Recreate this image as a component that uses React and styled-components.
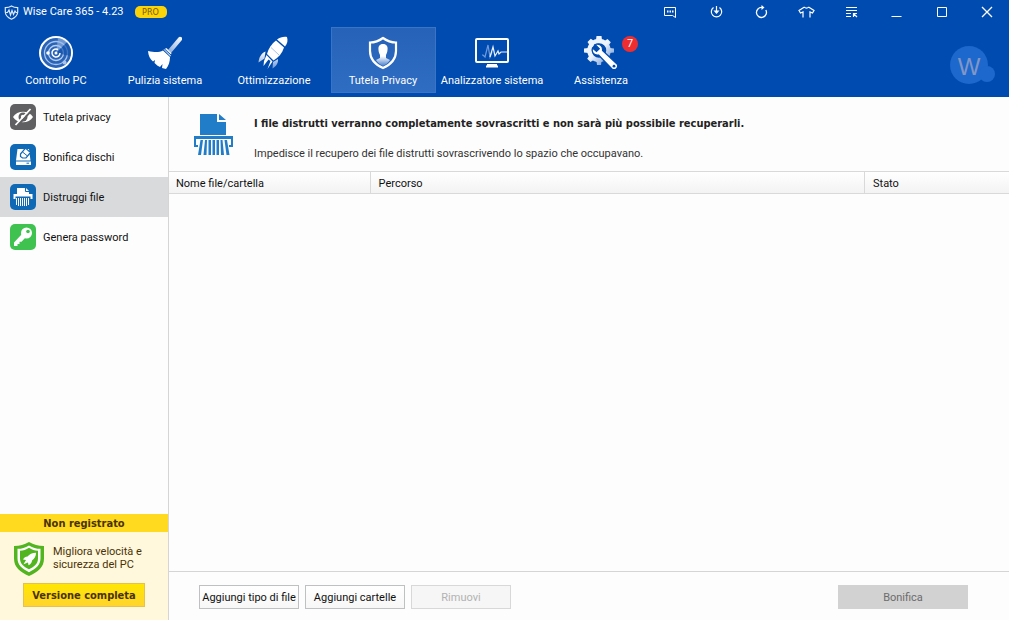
import React from "react";
import styled, { createGlobalStyle } from "styled-components";

const GlobalStyle = createGlobalStyle`
  * { box-sizing: border-box; }
  body {
    margin: 0;
    background: #fdfdfd;
    color: #111;
    font: 11px/14px Roboto, "DejaVu Sans Condensed", sans-serif;
  }
  button { font: inherit; color: inherit; padding: 0; border: 0; background: none; }
  svg { display: block; flex: none; }
`;

const boldFont = `"DejaVu Sans Condensed", "DejaVu Sans", sans-serif`;

const Window = styled.div`
  min-height: 100vh;
  display: flex;
  flex-direction: column;
`;

const Header = styled.header`
  background: #004bb0;
  color: #fff;
  padding-bottom: 4px;
`;

const TitleBar = styled.div`
  height: 24px;
  display: flex;
  align-items: center;
  padding-left: 4px;
`;

const AppTitle = styled.h1`
  margin: 0 11px 0 4px;
  font-size: 11px;
  font-weight: 400;
`;

const ProBadge = styled.span`
  width: 32px;
  height: 12px;
  border-radius: 5px;
  background: #fbd309;
  color: #7a5a00;
  font: 9px/12px "DejaVu Sans Condensed", sans-serif;
  text-align: center;
`;

const WindowControls = styled.div`
  margin-left: auto;
  display: flex;
`;

const ControlButton = styled.button`
  width: 45px;
  height: 24px;
  display: flex;
  align-items: center;
  justify-content: center;
`;

const ToolRow = styled.div`
  display: flex;
  align-items: center;
  padding: 3px 13px 0 4px;
`;

const Nav = styled.nav`
  display: flex;
  gap: 4px;
`;

const NavButton = styled.button`
  position: relative;
  width: 105px;
  height: 66px;
  display: flex;
  flex-direction: column;
  align-items: center;
  gap: 4px;
  padding: 8px 1px 0 0;
  white-space: nowrap;
  border: 1px solid ${(p) => (p.$active ? "#3a74c4" : "transparent")};
  background: ${(p) => (p.$active ? "linear-gradient(#2562b8, #2f6dc2)" : "none")};
`;

const Count = styled.span`
  position: absolute;
  top: 8px;
  right: 15px;
  width: 16px;
  height: 16px;
  border-radius: 8px;
  background: #ee2d30;
  line-height: 16px;
  text-align: center;
`;

const Account = styled.button`
  margin: 10px 0 0 auto;
`;

const Body = styled.div`
  flex: 1;
  display: flex;
`;

const Sidebar = styled.aside`
  width: 169px;
  flex: none;
  display: flex;
  flex-direction: column;
  border-right: 1px solid #d5d5d7;
`;

const SideLink = styled.a`
  height: 40px;
  display: flex;
  align-items: center;
  gap: 7px;
  padding-left: 10px;
  color: #111;
  text-decoration: none;
  background: ${(p) => (p.$active ? "#d9dadc" : "transparent")};
`;

const SideLabel = styled.span`
  padding-top: 2px;
`;

const Promo = styled.section`
  margin-top: auto;
  padding-bottom: 13px;
  background: #fff8dc;
  color: #4a3206;
`;

const PromoTitle = styled.h2`
  margin: 0;
  height: 18px;
  padding-top: 2px;
  font: 700 11px/16px ${boldFont};
  text-align: center;
  background: #ffda1f;
`;

const PromoText = styled.p`
  margin: 0;
  padding: 10px 8px 6px 14px;
  display: flex;
  gap: 9px;
  line-height: 13px;
`;

const PromoLines = styled.span`
  padding-top: 3px;
`;

const UpgradeButton = styled.button`
  display: block;
  width: 122px;
  height: 24px;
  margin: 0 auto;
  padding-top: 2px;
  border: 1px solid #e6c14c;
  background: linear-gradient(#ffe600, #ffd42e);
  font: 700 11px/14px ${boldFont};
`;

const Main = styled.main`
  flex: 1;
  min-width: 0;
  display: flex;
  flex-direction: column;
`;

const Intro = styled.section`
  height: 74px;
  display: flex;
  align-items: flex-start;
  gap: 20px;
  padding: 16px 24px 0;
`;

const IntroTitle = styled.h2`
  margin: 4px 0 16px;
  font: 700 11px/14px ${boldFont};
  color: #222;
`;

const IntroText = styled.p`
  margin: 0;
  color: #333;
`;

const FileTable = styled.table`
  width: 100%;
  table-layout: fixed;
  border-collapse: separate;
  border-spacing: 0;
`;

const HeadCell = styled.th`
  width: ${(p) => p.$width};
  height: 23px;
  padding: 2px 8px 0;
  text-align: left;
  font-weight: 400;
  border: solid #d9d9d9;
  border-width: 1px 1px 1px 0;
  background: linear-gradient(#fff, #f3f3f3);
  &:first-child { padding-left: 7px; }
  &:last-child { border-right: 0; }
`;

const Footer = styled.footer`
  margin-top: auto;
  display: flex;
  gap: 6px;
  padding: 13px 41px 11px 30px;
  border-top: 1px solid #d5d5d5;
`;

const FooterButton = styled.button`
  width: 100px;
  height: 24px;
  padding-top: 2px;
  white-space: nowrap;
  border: 1px solid #bfc0c2;
  background: linear-gradient(#fff, #f7f7f7);
  &:disabled {
    color: #b2b2b2;
    border-color: #d8d8d8;
    background: #f6f6f6;
  }
`;

const ShredButton = styled(FooterButton)`
  width: 130px;
  margin-left: auto;
  &:disabled {
    color: #6c6c6c;
    border-color: #d2d2d2;
    background: #d2d2d2;
  }
`;

const LogoIcon = () => (
  <svg width="15" height="15" viewBox="0 0 15 15" fill="none" stroke="#dceaff">
    <path d="M7.500 1C5.500 2.300 3.500 2.700 1.300 2.700V7c0 3.300 2.700 5.600 6.200 7.200 3.500-1.600 6.200-3.900 6.200-7.200V2.700c-2.200 0-4.200-.4-6.200-1.700Z" strokeWidth="1.200" />
    <path d="M2 7.500h1.500L5 5l1.500 5L8 5.500l1.500 4L11 6l1 1.500h1" strokeWidth="1.200" />
  </svg>
);

const RadarIcon = () => (
  <svg width="34" height="34" viewBox="0 0 34 34" fill="none" stroke="#fff">
    <circle cx="17" cy="17" r="16" strokeWidth="2" fill="#2a64b8" />
    <circle cx="17" cy="17" r="11.500" stroke="#a9c4ea" strokeWidth="1.300" />
    <circle cx="17" cy="17" r="7.500" stroke="#b9d0ef" strokeWidth="1.300" />
    <path d="M17 17 28 6a15 15 0 0 1 3.500 14Z" fill="#1252ae" fillOpacity=".7" stroke="none" />
    <path d="M17 17 19 2.200A15 15 0 0 1 28 6Z" fill="#9bbae6" fillOpacity=".6" stroke="none" />
    <path d="M19 13.500a4 4 0 1 0 2 3.500" strokeWidth="1.500" />
    <circle cx="17" cy="17" r="1.500" fill="#fff" stroke="none" />
    <circle cx="9" cy="17" r="1.800" fill="#fff" stroke="none" />
    <circle cx="25.500" cy="26.500" r="2" fill="#a9c4ea" stroke="none" />
  </svg>
);

const BroomIcon = () => (
  <svg width="34" height="34" viewBox="0 0 34 34">
    <defs>
      <linearGradient id="handle" x1="1" y1="0" x2="0" y2="1">
        <stop offset="0" stopColor="#fff" />
        <stop offset="1" stopColor="#86a9dc" />
      </linearGradient>
    </defs>
    <path d="m20 14 10.500-12.500a2 2 0 0 1 3.200 2.700L23 17Z" fill="url(#handle)" />
    <path d="m15.500 13.500 3-1.500 5 5-1 3.500Z" fill="#e7effb" />
    <path d="M15 14.500c-4 2-8 2-15 .5.500 5 2 8 5 10.500l2-1.500-.5 3c2 2 3.500 3 5.500 4l2.500-3-.5 4 4 1c2.500-3 4-7 4-12Z" fill="#fff" />
    <path d="m16 12.500 8 7.500" stroke="#004bb0" />
  </svg>
);

const RocketIcon = () => (
  <svg width="34" height="34" viewBox="0 0 34 34">
    <defs>
      <linearGradient id="fin" x1="0" y1="0" x2="0" y2="1">
        <stop offset="0" stopColor="#fff" />
        <stop offset="1" stopColor="#6f99d6" />
      </linearGradient>
    </defs>
    <path d="M30 1c-4-.5-7 .5-10 2.500l8 7c2.500-3 3-6 2-9.500Z" fill="#fff" />
    <path d="M19 4.500c-4 3-7.500 7.500-9 13.500l6.500 6.500c5-3 8.500-7 10.500-13Z" fill="#fff" />
    <path d="M9.500 19 7 25l-.5 5 5-6.500 2 1.500-3 8L15.500 25.500Z" fill="#fff" />
    <path d="M8.500 15.500c-4.500 2-6.500 6-7 11l6-4ZM21 23c.5 4-1.500 7-5.500 9.500l.5-6.500Z" fill="url(#fin)" />
    <path d="m14 11.500 8 7.500" stroke="#a9c3e8" />
  </svg>
);

const PrivacyIcon = () => (
  <svg width="34" height="34" viewBox="0 0 34 34">
    <defs>
      <linearGradient id="bust" x1="0" y1="0" x2="0" y2="1">
        <stop offset=".55" stopColor="#fff" />
        <stop offset="1" stopColor="#4b80cc" />
      </linearGradient>
    </defs>
    <path d="M17 2c-4 3-8 4.500-13 4.500V15c0 8 5 13.500 13 17 8-3.500 13-9 13-17V6.500C25 6.500 21 5 17 2Z" fill="none" stroke="#fff" strokeWidth="2.200" />
    <path d="M17 8c-3.500 0-5 2.500-4.500 6 .2 2.500 1 3.500 1.500 5v3l-4 2c1.500 2.500 4 4.500 7 6 3-1.500 5.500-3.500 7-6l-4-2v-3c.5-1.500 1.300-2.500 1.500-5 .5-3.500-1-6-4.500-6Z" fill="url(#bust)" />
  </svg>
);

const MonitorIcon = () => (
  <svg width="34" height="34" viewBox="0 0 34 34" fill="none">
    <rect x="1" y="3" width="32" height="23" rx="1" stroke="#fff" strokeWidth="2" />
    <path d="M11 30.500h12M12 29h10" stroke="#fff" strokeWidth="2" />
    <path d="M7 19h1l2 2 3-12 2 12 2-5" stroke="#6f9bdb" strokeWidth="1.200" />
    <path d="m15 21 3-10 2 9 3-5 1 3 2-2h6" stroke="#eaf2fd" strokeWidth="1.200" />
  </svg>
);

const SupportIcon = () => (
  <svg width="34" height="34" viewBox="0 0 34 34">
    <defs>
      <linearGradient id="gear" gradientUnits="userSpaceOnUse" x1="8" y1="6" x2="26" y2="26">
        <stop offset=".4" stopColor="#eef4fc" />
        <stop offset="1" stopColor="#6c97d6" />
      </linearGradient>
    </defs>
    <circle cx="15" cy="14.500" r="9.500" fill="none" stroke="url(#gear)" strokeWidth="4.500" />
    <path
      d="M12 4 12.500 0h5l.5 4ZM20.500 5l3-2 3.300 3.300-2 3ZM25.500 12l4.500.5v4l-4.500.5ZM24.500 20l2 3-3.300 3.300-3-2ZM17.500 25l-.5 4h-4l-.5-4ZM9.500 24l-3 2-3.300-3.300 2-3ZM4.500 17 0 16.500v-4L4.500 12ZM5.500 9l-2-3 3.300-3.300 3 2Z"
      fill="url(#gear)"
    />
    <path d="M11 8.500c4.500-1.200 8 1.500 7.500 6l14.500 13.500a3.600 3.600 0 0 1-5 5L14.500 19c-4.500.5-7.200-2.500-6-7l4 3.500 2.800-2.800Z" fill="#fff" stroke="#004bb0" strokeWidth="1.200" />
    <circle cx="30" cy="30.200" r="1.400" fill="#004bb0" />
  </svg>
);

const AccountIcon = () => (
  <svg width="46" height="38" viewBox="0 0 46 38">
    <circle cx="19" cy="19" r="19" fill="#1c68cc" />
    <circle cx="37" cy="28" r="8" fill="#1c68cc" />
    <text x="19" y="29" fontFamily="Liberation Sans, sans-serif" fontSize="24" textAnchor="middle" fill="#8196c8">W</text>
  </svg>
);

const Glyph = ({ children }) => (
  <svg width="17" height="15" viewBox="0 0 17 15" fill="none" stroke="#fff">{children}</svg>
);

const controls = [
  ["Commenti", <Glyph><path d="M1.500 2.500h11v10l-3-2h-8Z" /><path d="M4 6.500h1.500M6.500 6.500H8M9 6.500h1.500" strokeWidth="2" /></Glyph>],
  ["Aggiorna", <Glyph><path d="M5.500 2.500a5.200 5.200 0 1 0 6 0M8.500 1v7" strokeWidth="1.200" /><path d="M5.500 5.500h6L8.500 9Z" fill="#fff" stroke="none" /></Glyph>],
  ["Ricarica", <Glyph><path d="M12.800 5A5 5 0 1 1 9 2.500" strokeWidth="1.300" /><path d="M8.500 0v5l3-2.500Z" fill="#fff" stroke="none" /></Glyph>],
  ["Aspetto", <Glyph><path d="M6.500 2 1 5.500 2.500 8 5 7v5.500M10.500 2 16 5.500 14.500 8 12 7v5.500M6.500 2c1 1.500 3 1.500 4 0" strokeWidth="1.200" /></Glyph>],
  ["Menu", <Glyph><path d="M3 2.500h11M3 5.500h11M3 8.500h5M3 11.500h5M10 8.500h4M10.500 8v4M10.500 8.500 14 12" strokeWidth="1.200" /></Glyph>],
  ["Riduci a icona", <Glyph><path d="M3.500 11.500h10" /></Glyph>],
  ["Ingrandisci", <Glyph><path d="M4.500 2.500h9v9h-9z" /></Glyph>],
  ["Chiudi", <Glyph><path d="m4 2 10 10M14 2 4 12" strokeWidth="1.300" /></Glyph>],
];

const tools = [
  ["Controllo PC", RadarIcon],
  ["Pulizia sistema", BroomIcon],
  ["Ottimizzazione", RocketIcon],
  ["Tutela Privacy", PrivacyIcon],
  ["Analizzatore sistema", MonitorIcon],
  ["Assistenza", SupportIcon, 7],
];

const Tile = ({ color, children }) => (
  <svg width="26" height="26" viewBox="0 0 26 26">
    <rect width="26" height="26" rx="5" fill={color} />
    {children}
  </svg>
);

const sections = [
  ["Tutela privacy", (
    <Tile color="#606062">
      <path d="M3 13c4-7 16-7 20 0-4 7-16 7-20 0Z" fill="#fff" />
      <circle cx="13" cy="13" r="4.500" fill="#606062" />
      <circle cx="13" cy="13" r="2.200" fill="#fff" />
      <path d="m7 22 15-16" stroke="#606062" strokeWidth="2" />
      <path d="m5.500 21 15-16" stroke="#fff" strokeWidth="1.800" />
    </Tile>
  )],
  ["Bonifica dischi", (
    <Tile color="#1069b4">
      <path d="M7.500 5H19l1.500 11.500H6ZM6 17.500h15V21H6Z" fill="#fff" />
      <path d="m10.500 10 5-6 5 4.500-4.500 5.500h-3.500l-2-1.500Z" fill="#fff" stroke="#1069b4" strokeWidth="1.200" />
      <path d="m12.500 8 5 4" stroke="#1069b4" />
      <path d="M16.500 19.200h2.500" stroke="#1069b4" />
    </Tile>
  )],
  ["Distruggi file", (
    <Tile color="#1069b4">
      <path d="M7 4h9l3 3v4H7Z" fill="#fff" />
      <path d="M15.500 4v3.500H19" fill="none" stroke="#1069b4" />
      <path d="M3.500 10h19v5h-2v-2.500h-15V15h-2Z" fill="#fff" />
      <path d="M6.500 14v7M8.500 14v8M10.500 14v8M12.500 14v8M14.500 14v8M16.500 14v8M18.500 14v7" stroke="#fff" />
    </Tile>
  ), true],
  ["Genera password", (
    <Tile color="#3fc250">
      <circle cx="16.500" cy="9" r="5.500" fill="#fff" />
      <circle cx="18" cy="7.500" r="1.800" fill="#3fc250" />
      <path d="m12 10-8 8.500V22h3.500v-2h2v-2.200h2L15 14Z" fill="#fff" />
    </Tile>
  )],
];

const ShredderIcon = () => (
  <svg width="41" height="44" viewBox="0 0 41 44" fill="#227dc8">
    <path d="M7 1h17v8h9v13H7ZM26 1l7 6h-7Z" />
    <path d="M1 23h39v11h-4v-2h2v-6H3v6h2v2H1Z" />
    <path d="m7.500 27-2.500 15h3l2-15ZM12 27l-1.500 15h3l.5-15ZM15.500 27v15H18V27ZM19.500 27v15H22V27ZM23.500 27v15H26V27ZM27.500 27l.5 15h3l-1.500-15ZM31.500 27l2 15h3L34 27Z" />
  </svg>
);

const GreenShield = () => (
  <svg width="30" height="35" viewBox="0 0 30 36" preserveAspectRatio="none">
    <path d="M15 0C10 3 6 4 0 4v13c0 9 6 14 15 18 9-4 15-9 15-18V4C24 4 20 3 15 0Z" fill="#52b51f" />
    <path d="M15 3.500C11 6 8 7 3.500 7v10c0 6.500 4.500 10.500 11.500 14C22 27.500 26.500 23.500 26.500 17V7c-4.500 0-7.500-1-11.500-3.500Z" fill="#fff" />
    <path d="M15 6C12 8 9.500 9 6 9v8c0 5 3.500 8.500 9 11 5.500-2.500 9-6 9-11V9c-3.500 0-6-1-9-3Z" fill="#52b51f" />
    <path d="M22 11c-4 0-6.500 1.500-8.500 4-2 0-3.500 1-4.500 3l3 .5-2.500 4.500 4.500-2 .5 3c2-1 3.500-3 3.500-5 2.500-2 4-4.500 4-8Z" fill="#fff" />
  </svg>
);

export default function App() {
  return (
    <Window>
      <GlobalStyle />
      <Header>
        <TitleBar>
          <LogoIcon />
          <AppTitle>Wise Care 365 - 4.23</AppTitle>
          <ProBadge>PRO</ProBadge>
          <WindowControls>
            {controls.map(([label, icon]) => (
              <ControlButton key={label} aria-label={label}>{icon}</ControlButton>
            ))}
          </WindowControls>
        </TitleBar>
        <ToolRow>
          <Nav>
            {tools.map(([label, Icon, count]) => (
              <NavButton key={label} $active={label === "Tutela Privacy"}>
                <Icon />
                <span>{label}</span>
                {count && <Count>{count}</Count>}
              </NavButton>
            ))}
          </Nav>
          <Account aria-label="Account"><AccountIcon /></Account>
        </ToolRow>
      </Header>
      <Body>
        <Sidebar>
          <nav>
            {sections.map(([label, icon, active]) => (
              <SideLink key={label} href="#" $active={active}>
                {icon}
                <SideLabel>{label}</SideLabel>
              </SideLink>
            ))}
          </nav>
          <Promo>
            <PromoTitle>Non registrato</PromoTitle>
            <PromoText>
              <GreenShield />
              <PromoLines>Migliora velocità e<br />sicurezza del PC</PromoLines>
            </PromoText>
            <UpgradeButton>Versione completa</UpgradeButton>
          </Promo>
        </Sidebar>
        <Main>
          <Intro>
            <ShredderIcon />
            <div>
              <IntroTitle>I file distrutti verranno completamente sovrascritti e non sarà più possibile recuperarli.</IntroTitle>
              <IntroText>Impedisce il recupero dei file distrutti sovrascrivendo lo spazio che occupavano.</IntroText>
            </div>
          </Intro>
          <FileTable>
            <thead>
              <tr>
                <HeadCell $width="24%">Nome file/cartella</HeadCell>
                <HeadCell $width="auto">Percorso</HeadCell>
                <HeadCell $width="144px">Stato</HeadCell>
              </tr>
            </thead>
          </FileTable>
          <Footer>
            <FooterButton>Aggiungi tipo di file</FooterButton>
            <FooterButton>Aggiungi cartelle</FooterButton>
            <FooterButton disabled>Rimuovi</FooterButton>
            <ShredButton disabled>Bonifica</ShredButton>
          </Footer>
        </Main>
      </Body>
    </Window>
  );
}
